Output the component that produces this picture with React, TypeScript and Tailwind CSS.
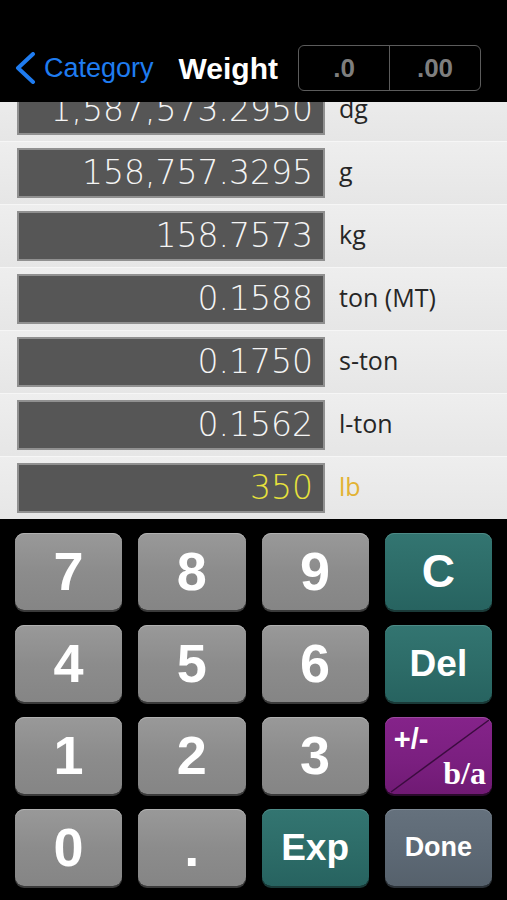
import React from "react";

const rows = [
  { v: "1,587,573.2950", u: "dg" },
  { v: "158,757.3295", u: "g" },
  { v: "158.7573", u: "kg" },
  { v: "0.1588", u: "ton (MT)" },
  { v: "0.1750", u: "s-ton" },
  { v: "0.1562", u: "l-ton" },
  { v: "350", u: "lb", active: true },
];

const grayKey =
  "bg-[linear-gradient(180deg,#999999_0%,#8c8c8c_50%,#858585_100%)] shadow-[inset_0_1px_0_#b0b0b0,0_2px_0_#3a3a3a]";
const tealKey =
  "bg-[linear-gradient(180deg,#337571_0%,#2c6b67_60%,#276360_100%)] shadow-[inset_0_1px_0_#4d8a86,0_2px_0_#1a3a38]";

function Key({
  children,
  cls,
  text,
}: {
  children: React.ReactNode;
  cls: string;
  text: string;
}) {
  return (
    <div
      className={`relative h-[77px] rounded-[9px] flex items-center justify-center text-white font-bold ${cls} ${text}`}
      style={{ fontFamily: '"Liberation Sans", Arial, sans-serif' }}
    >
      {children}
    </div>
  );
}

export default function App() {
  return (
    <div className="w-[507px] h-[900px] bg-black overflow-hidden flex flex-col">
      {/* Header */}
      <div className="h-[102px] bg-black shrink-0 pt-[45px]">
        <div className="flex items-center h-[46px]">
          <svg width="22" height="32" viewBox="0 0 22 32" className="ml-[14px]">
            <polyline
              points="19,2 4,16 19,30"
              fill="none"
              stroke="#1f7cf0"
              strokeWidth="4"
              strokeLinecap="round"
              strokeLinejoin="round"
            />
          </svg>
          <span
            className="ml-[8px] text-[27px] text-[#1f7cf0]"
            style={{ fontFamily: '"Liberation Sans", Arial, sans-serif' }}
          >
            Category
          </span>
          <span
            className="ml-[25px] text-[30px] font-bold text-white"
            style={{ fontFamily: '"Liberation Sans", Arial, sans-serif' }}
          >
            Weight
          </span>
          <div
            className="ml-auto mr-[26px] w-[183px] h-[46px] border-[1.5px] border-[#5c5c5c] rounded-[6px] flex text-[#7e7e7e] text-[26px] font-bold"
            style={{ fontFamily: '"Liberation Sans", Arial, sans-serif' }}
          >
            <div className="flex-1 flex items-center justify-center border-r-[1.5px] border-[#5c5c5c]">
              .0
            </div>
            <div className="flex-1 flex items-center justify-center">.00</div>
          </div>
        </div>
      </div>

      {/* List */}
      <div className="h-[417px] shrink-0 overflow-hidden bg-[#e6e6e6]">
        <div className="mt-[-24px] flex flex-col">
          {rows.map((r) => (
            <div
              key={r.u}
              className="h-[63px] flex items-start border-t border-[#f6f6f6] bg-[linear-gradient(180deg,#eeeeee_0%,#e6e6e6_100%)]"
            >
              <div
                className="mt-[6px] ml-[17px] w-[308px] h-[50px] bg-[#565656] border-2 border-[#909090] flex items-center justify-end pr-[10px] text-[33px] font-light"
                style={{
                  fontFamily: '"DejaVu Sans", sans-serif',
                  color: r.active ? "#e8e23c" : "#f4f4f4",
                }}
              >
                {r.v}
              </div>
              <div
                className="h-[60px] flex items-center ml-[14px] text-[25px]"
                style={{
                  fontFamily: '"Open Sans", sans-serif',
                  color: r.active ? "#e2b232" : "#262626",
                }}
              >
                {r.u}
              </div>
            </div>
          ))}
        </div>
      </div>

      {/* Keypad */}
      <div className="flex-1 bg-black px-[15px] pt-[14px] grid grid-cols-4 gap-x-[16px] gap-y-[15px] content-start">
        <Key cls={grayKey} text="text-[54px]">7</Key>
        <Key cls={grayKey} text="text-[54px]">8</Key>
        <Key cls={grayKey} text="text-[54px]">9</Key>
        <Key cls={tealKey} text="text-[46px]">C</Key>

        <Key cls={grayKey} text="text-[54px]">4</Key>
        <Key cls={grayKey} text="text-[54px]">5</Key>
        <Key cls={grayKey} text="text-[54px]">6</Key>
        <Key cls={tealKey} text="text-[37px]">Del</Key>

        <Key cls={grayKey} text="text-[54px]">1</Key>
        <Key cls={grayKey} text="text-[54px]">2</Key>
        <Key cls={grayKey} text="text-[54px]">3</Key>
        <div className="relative h-[77px] rounded-[9px] overflow-hidden bg-[linear-gradient(180deg,#85238a_0%,#7a1f7f_60%,#701a74_100%)] shadow-[inset_0_1px_0_#9a4a9e,0_2px_0_#2a0a2c]">
          <svg
            className="absolute inset-0"
            width="107"
            height="77"
            viewBox="0 0 107 77"
            preserveAspectRatio="none"
          >
            <line x1="6" y1="75" x2="104" y2="3" stroke="#3b0c3f" strokeWidth="1.5" />
          </svg>
          <span
            className="absolute left-[9px] top-[8px] text-white font-bold text-[29px] leading-none"
            style={{ fontFamily: '"Liberation Sans", Arial, sans-serif' }}
          >
            +/-
          </span>
          <span
            className="absolute right-[6px] bottom-[5px] text-white font-bold text-[32px] leading-none"
            style={{ fontFamily: '"Liberation Serif", "Times New Roman", serif' }}
          >
            b/a
          </span>
        </div>

        <Key cls={grayKey} text="text-[54px]">0</Key>
        <Key cls={grayKey} text="text-[54px]">.</Key>
        <Key cls={tealKey} text="text-[37px]">Exp</Key>
        <Key
          cls="bg-[linear-gradient(180deg,#65717d_0%,#5c6874_60%,#56616c_100%)] shadow-[inset_0_1px_0_#7d8893,0_2px_0_#2a3036]"
          text="text-[27px]"
        >
          Done
        </Key>
      </div>
    </div>
  );
}
